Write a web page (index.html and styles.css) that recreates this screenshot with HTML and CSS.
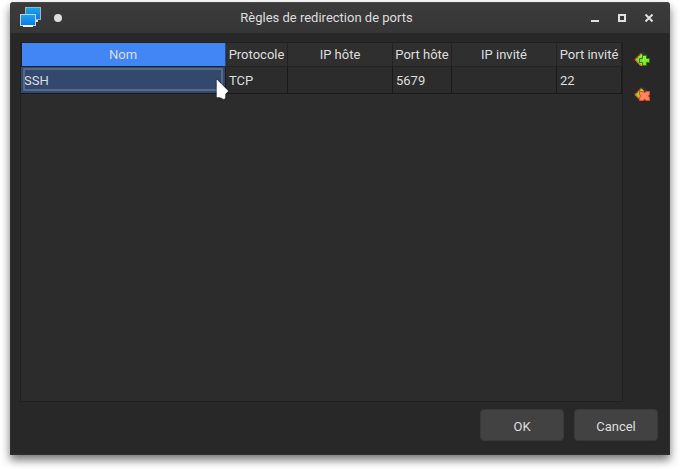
FILE: index.html
```html
<!DOCTYPE html>
<html lang="fr">
<head>
<meta charset="utf-8">
<title>Règles de redirection de ports</title>
<link rel="stylesheet" href="styles.css">
</head>
<body>
<main class="window">
  <header class="titlebar">
    <svg class="app-icon" width="22" height="22" viewBox="0 0 22 22">
      <defs><linearGradient id="screen" x1="0" y1="0" x2="0" y2="1"><stop offset="0" stop-color="#20a6e8"/><stop offset="1" stop-color="#0879ee"/></linearGradient></defs>
      <rect x="5.500" y="1.500" width="15" height="12" fill="url(#screen)" stroke="#a5b4bb"/>
      <path d="M16 14h2v2h-2z" fill="#ddd"/>
      <rect x=".5" y="8.500" width="15" height="11" fill="url(#screen)" stroke="#c8d2d6"/>
      <path d="M3 19h10v2H3z" fill="#f1f1f1"/>
    </svg>
    <span class="dot"></span>
    <h1>Règles de redirection de ports</h1>
    <svg class="controls" width="64" height="12" viewBox="0 0 64 12">
      <path d="M1 9h8v2H1z" fill="#e0e0e0"/>
      <rect x="29" y="4" width="6" height="6" fill="none" stroke="#e0e0e0" stroke-width="2"/>
      <path d="M55.500 3.500l7 7M62.500 3.500l-7 7" stroke="#e0e0e0" stroke-width="2"/>
    </svg>
  </header>
  <div class="content">
    <section class="table-frame">
      <div class="row head">
        <div class="active">Nom</div><div>Protocole</div><div>IP hôte</div><div>Port hôte</div><div>IP invité</div><div>Port invité</div>
      </div>
      <div class="row data">
        <div class="selected">SSH
          <svg class="cursor" width="14" height="22" viewBox="0 0 14 22"><path d="M1 1v17h3l2 1 2 1 1-1v-4l3-3z" fill="#fff" stroke="#fff" stroke-width=".6"/></svg>
        </div><div>TCP</div><div></div><div>5679</div><div></div><div>22</div>
      </div>
    </section>
    <aside class="tools">
      <svg width="18" height="16" viewBox="0 0 18 16">
        <defs><linearGradient id="leaf" x1="0" y1="0" x2="0" y2="1"><stop offset="0" stop-color="#a2ee3b"/><stop offset=".55" stop-color="#72e91d"/><stop offset="1" stop-color="#f0cb30"/></linearGradient></defs>
        <path d="M6 2l3-2 5 4-4 3z" fill="#363636"/>
        <path d="M1 7.500L7 1v12.500l-1 0z" fill="url(#leaf)"/>
        <path d="M7 1.500l3 3v9H7z" fill="url(#leaf)"/>
        <path d="M.8 7.500L7.500 1" stroke="#b93712" stroke-width="1.500" stroke-dasharray="2 .5"/>
        <path d="M1 7.500l6 6" stroke="#e06b28" stroke-width="1.200"/>
        <path d="M8.500 3.500h4v3h3v4h-3v3h-4v-3h-3v-4h3z" fill="#7ee525" stroke="#287d08"/>
        <path d="M9.500 10v-5.500h2v3h3" fill="none" stroke="#a4f052"/>
      </svg>
      <svg width="18" height="16" viewBox="0 0 18 16">
        <path d="M6 2l3-2 5 4-4 3z" fill="#363636"/>
        <path d="M1 7.500L7 1l3 3v9.500H7z" fill="url(#leaf)"/>
        <path d="M.8 7.500L7.500 1" stroke="#b93712" stroke-width="1.500" stroke-dasharray="2 .5"/>
        <path d="M1 7.500l6 6" stroke="#e06b28" stroke-width="1.200"/>
        <path d="M5.500 4.500h3l2 1 2-1h3v3l-1 1.500 1 1.500v3h-3l-2-1-2 1h-3v-3l1-1.500-1-1.500z" fill="#ff7c57" stroke="#e04a27"/>
        <path d="M7 5.500l7 7M14 5.500l-7 7" stroke="#ff9877"/>
      </svg>
    </aside>
  </div>
  <footer class="actions"><button>OK</button><button>Cancel</button></footer>
</main>
</body>
</html>
```

FILE: styles.css
```css
* { box-sizing: border-box; }
body { margin: 0; height: 469px; overflow: hidden; background: #fff; padding: 2px 10px 14px; font: 13px/16px Roboto, sans-serif; color: #dedede; }
.window { height: 453px; background: #282828; border-radius: 4px 4px 0 0; box-shadow: inset 0 0 0 1px #303030, 0 5px 10px rgba(0,0,0,.55); display: flex; flex-direction: column; }
.titlebar { height: 31px; flex: none; background: linear-gradient(#3b3b3b, #363636); border-top: 1px solid #4a4a4a; border-radius: 4px 4px 0 0; display: grid; grid-template-columns: 22px 8px 1fr 64px; align-items: center; padding: 0 16px 0 10px; }
.app-icon { margin-top: -2px; }
.dot { width: 8px; height: 8px; border-radius: 50%; background: #dedede; margin: -1px 0 0 12px; }
h1 { margin: 0; font-size: 13px; line-height: 16px; font-weight: 400; text-align: center; padding-left: 13px; }
.controls { margin-top: -3px; }
.content { display: flex; height: 360px; margin: 9px 0 0 10px; }
.table-frame { width: 603px; border: 1px solid #202020; background: #2c2c2c; }
.row { display: grid; grid-template-columns: 205px 62px 105px 59px 105px 65px; }
.row > div { white-space: nowrap; }
.head { height: 24px; background: #2f2f2f; }
.head > div { text-align: center; line-height: 23px; border-right: 1px solid #222; border-bottom: 1px solid #222; }
.head .active { background: #4285f5; border-left: 1px solid #202020; border-right-color: #244a8a; padding-right: 1px; }
.data { height: 27px; }
.data > div { height: 27px; padding: 1px 0 0 3px; line-height: 26px; border-right: 1px solid #1a1a1a; border-bottom: 1px solid #1a1a1a; }
.data .selected { position: relative; background: #33486e; }
.selected::before { content: ""; position: absolute; inset: 1px 2px 2px 2px; border: 2px solid #566987; border-radius: 1px; }
.cursor { position: absolute; left: 195px; top: 12px; z-index: 1; filter: drop-shadow(0 0 1px #17233a); }
.tools { width: 18px; margin: 10px 0 0 11px; display: flex; flex-direction: column; gap: 19px; }
.tools svg { display: block; }
.actions { display: flex; justify-content: flex-end; gap: 10px; padding: 7px 12px 0 0; }
button { width: 84px; height: 32px; border: 1px solid #393939; border-radius: 4px; background: #424242; color: #dedede; font: 13px/16px Roboto, sans-serif; padding: 4px 0 0; }
```
